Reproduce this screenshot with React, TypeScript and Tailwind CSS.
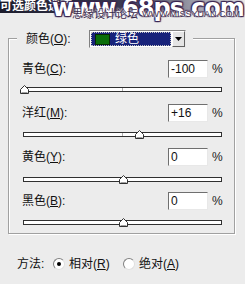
import React from "react";

const font = { fontFamily: '"Liberation Sans", "Noto Sans CJK SC", sans-serif' };

function Thumb({ x }: { x: number }) {
  return (
    <svg
      className="absolute top-[-3px]"
      style={{ left: x - 4.5 }}
      width="9"
      height="9"
      viewBox="0 0 9 9"
    >
      <path d="M0.5 8.5 V4.5 L4.5 0.5 L8.5 4.5 V8.5 Z" fill="#ffffff" stroke="#303030" strokeWidth="1" />
      <path d="M1.5 7.5 H7.5" stroke="#a0a0a0" strokeWidth="1" />
    </svg>
  );
}

function Track({ x }: { x: number }) {
  return (
    <div className="relative ml-[14px] w-[199px] h-[5px] shrink-0 border border-[#303030] bg-white">
      <div className="absolute left-[98px] top-0 h-[3px] w-px bg-[#b0b0b0]" />
      <Thumb x={x} />
    </div>
  );
}

function Row({ label, k, value }: { label: string; k: string; value: string }) {
  return (
    <div className="flex items-center h-[18px] shrink-0">
      <div className="ml-[13px] w-[146px] text-[12px] text-[#111] leading-none">
        {label}(<u>{k}</u>):
      </div>
      <div className="w-[40px] h-[18px] bg-white border border-t-[#6f6f6f] border-l-[#6f6f6f] border-r-[#e8e8e8] border-b-[#e8e8e8] flex items-center pl-[2px] text-[12px] text-[#111] leading-none">
        {value}
      </div>
      <div className="ml-[4px] text-[12px] text-[#222] leading-none">%</div>
    </div>
  );
}

function Radio({ checked }: { checked?: boolean }) {
  return (
    <div className="w-[12px] h-[12px] rounded-full bg-white border border-t-[#808080] border-l-[#808080] border-r-[#e0e0e0] border-b-[#e0e0e0] flex items-center justify-center">
      {checked && <div className="w-[4px] h-[4px] rounded-full bg-black" />}
    </div>
  );
}

export default function App() {
  return (
    <div className="relative w-[245px] h-[284px] bg-[#ececec] overflow-hidden flex flex-col" style={font}>
      {/* title bar */}
      <div className="h-[13px] shrink-0 bg-gradient-to-r from-[#1c1c2c] via-[#3a3a52] to-[#ececec] flex items-start">
        <span className="text-white font-bold text-[12px] leading-[12px]">可选颜色选项</span>
      </div>

      {/* group box */}
      <div className="ml-[8px] mt-[25px] w-[227px] shrink-0 border border-[#a0a0a0] shadow-[inset_1px_1px_0_#ffffff,1px_1px_0_#ffffff] flex flex-col pb-[8px]">
        <div className="-mt-[9px] ml-[8px] w-[176px] h-[18px] shrink-0 bg-[#ececec] flex items-center">
          <div className="ml-[9px] w-[63px] text-[12px] text-[#111] leading-none">
            颜色(<u>O</u>):
          </div>
          <div className="w-[97px] h-[18px] bg-white border border-t-[#808080] border-l-[#808080] border-r-[#e8e8e8] border-b-[#e8e8e8] flex items-stretch">
            <div className="flex-1 m-[1px] bg-[#18237a] border border-dotted border-[#c0c0c0] flex items-center">
              <div className="ml-[3px] w-[15px] h-[11px] bg-[#0a6e0a] border border-[#062806]" />
              <span className="ml-[5px] text-white text-[12px] leading-none">绿色</span>
            </div>
            <div className="w-[13px] bg-[#e4e4e4] border border-t-[#ffffff] border-l-[#ffffff] border-r-[#606060] border-b-[#606060] flex items-center justify-center">
              <svg width="7" height="4" viewBox="0 0 7 4">
                <path d="M0 0 H7 L3.5 4 Z" fill="#000" />
              </svg>
            </div>
          </div>
        </div>

        <div className="mt-[12px]"><Row label="青色" k="C" value="-100" /></div>
        <div className="mt-[9px]"><Track x={0} /></div>
        <div className="mt-[12px]"><Row label="洋红" k="M" value="+16" /></div>
        <div className="mt-[10px]"><Track x={115} /></div>
        <div className="mt-[11px]"><Row label="黄色" k="Y" value="0" /></div>
        <div className="mt-[11px]"><Track x={99} /></div>
        <div className="mt-[10px]"><Row label="黑色" k="B" value="0" /></div>
        <div className="mt-[10px]"><Track x={99} /></div>
      </div>

      {/* method */}
      <div className="mt-[23px] ml-[17px] flex items-center h-[14px] shrink-0 text-[12px] text-[#111] leading-none">
        <span className="w-[36px]">方法:</span>
        <Radio checked />
        <span className="ml-[4px] w-[54px]">相对(<u>R</u>)</span>
        <Radio />
        <span className="ml-[4px]">绝对(<u>A</u>)</span>
      </div>

      {/* watermark overlay */}
      <div className="absolute left-[52px] top-[-4px] text-[24px] font-bold text-white leading-none tracking-[-1px] [text-shadow:0_0_2px_#3a2450,1px_1px_1px_#3a2450,-1px_-1px_1px_#3a2450,1px_-1px_1px_#3a2450,-1px_1px_1px_#3a2450]" style={{ fontFamily: '"DejaVu Sans", sans-serif' }}>
        www.68ps.com
      </div>
      <div className="absolute left-[72px] top-[8px] flex items-end gap-[4px] leading-none [text-shadow:0_0_2px_#ffffff,0_0_2px_#ffffff]">
        <span className="text-[11px] text-[#3a2a4a]" style={{ fontFamily: '"Noto Sans CJK SC", sans-serif' }}>思缘设计论坛</span>
        <span className="text-[9px] text-[#3a2a4a]" style={{ fontFamily: '"Liberation Sans", sans-serif' }}>WWW.MISSYUAN.COM</span>
      </div>
    </div>
  );
}
